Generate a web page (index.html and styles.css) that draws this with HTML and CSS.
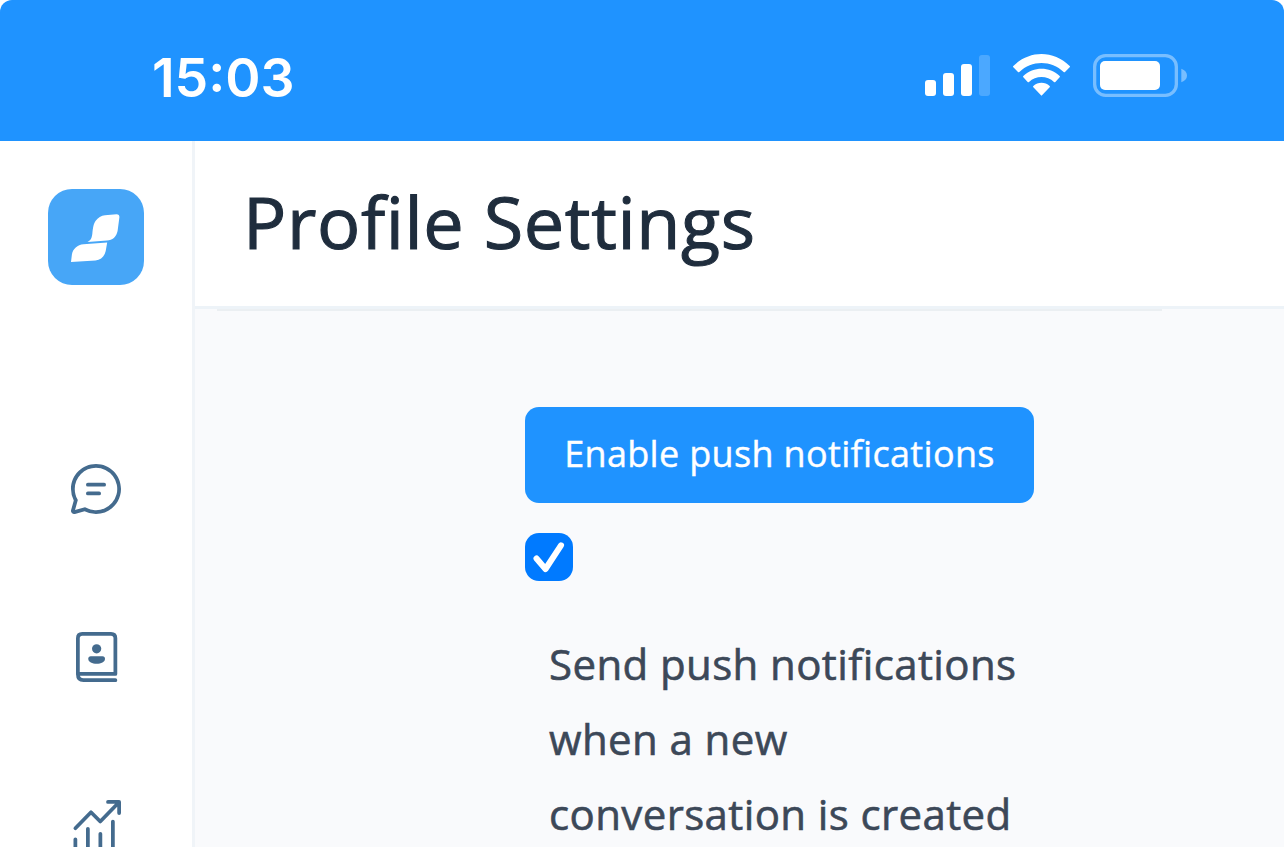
FILE: index.html
```
<!DOCTYPE html>
<html lang="en">
<head>
  <meta charset="utf-8">
  <title>Profile Settings</title>
  <link rel="stylesheet" href="styles.css">
</head>
<body>
  <div class="status-bar">
    <span class="time">15:03</span>
    <div class="status-icons">
      <svg class="signal" viewBox="0 0 65 41">
        <rect x="0" y="25" width="11" height="16" rx="3" />
        <rect x="18" y="18" width="11" height="23" rx="3" />
        <rect x="36" y="9" width="11" height="32" rx="3" />
        <rect x="54" y="0" width="11" height="41" rx="3" opacity="0.2" />
      </svg>
      <svg class="wifi" viewBox="0 0 171 126">
        <path d="M1 36C49-12 122-12 170 36Q172 38 170 40L156 54Q154 56 152 54C115 18 56 18 19 54Q17 56 15 54L1 40Q-1 38 1 36Z" />
        <path d="M31 66C62 37 109 37 140 66Q142 68 140 70L127 84Q125 86 123 84C103 64 68 64 48 84Q46 86 44 84L31 70Q29 68 31 66Z" />
        <path d="M61 96C75 83 96 83 110 96Q112 98 110 100L87 124Q85.500 126 84 124L61 100Q59 98 61 96Z" />
      </svg>
      <svg class="battery" viewBox="0 0 94 43">
        <rect class="battery-case" x="1.650" y="1.650" width="81.700" height="39.700" rx="11" />
        <rect x="7" y="7" width="60" height="29" rx="5" />
        <path d="M88.300 14.700Q94 17 94 21.500T88.300 28.300Z" opacity="0.4" />
      </svg>
    </div>
  </div>

  <div class="app">
    <nav class="sidebar">
      <a class="logo">
        <svg viewBox="0 0 96 96">
          <path d="M57 26.300L68.500 25.200Q71.600 25.200 71.400 28.300L69.600 42C68.300 48 64.500 51.200 59 51.600L39.500 53C43 51.500 43.800 48.500 44.300 45C45 38 45.400 35.500 47.500 32Q51.300 26.900 57 26.300Z" />
          <path d="M59.200 53.600L57.700 62C56.400 67.500 53 70.900 47.500 71.400L23 73L23.900 65.500C24.800 60 29.500 55.700 35.500 55.300Z" />
        </svg>
      </a>
      <a class="nav-item">
        <svg viewBox="0 0 24 24">
          <path class="solid" d="M12 2c5.523 0 10 4.477 10 10s-4.477 10-10 10a9.960 9.960 0 0 1-4.587-1.112l-3.826 1.067a1.250 1.250 0 0 1-1.540-1.540l1.068-3.823A9.960 9.960 0 0 1 2 12C2 6.477 6.477 2 12 2Zm0 1.500A8.500 8.500 0 0 0 3.500 12c0 1.470.373 2.883 1.073 4.137l.150.270-1.112 3.984 3.987-1.112.270.150A8.500 8.500 0 1 0 12 3.500Z" />
          <path d="M8.750 10.250h6.500M8.750 13.750h4.500" />
        </svg>
      </a>
      <a class="nav-item">
        <svg viewBox="0 0 24 24">
          <path d="M4.750 19V4.500Q4.750 2.750 6.500 2.750H18Q19.750 2.750 19.750 4.500V18.750H4.750Q4.750 21.250 7 21.250H19.750" />
          <circle class="solid" cx="12.250" cy="8.700" r="1.850" />
          <path class="solid" d="M9.900 11.700H14.600Q15.600 11.700 15.600 12.700C15.600 14 14 14.700 12.250 14.700S8.900 14 8.900 12.700Q8.900 11.700 9.900 11.700Z" />
        </svg>
      </a>
      <a class="nav-item">
        <svg viewBox="0 0 24 24">
          <path d="M3.750 13.300L10 6.900L13.700 10.600L21.200 2.900M16.800 2.750H21.250V7.200" />
          <path d="M3.750 17.700V21.250M8.750 13.500V21.250M13.750 15.500V21.250M18.750 10.600V21.250" />
        </svg>
      </a>
    </nav>

    <div class="main">
      <header class="page-header">
        <h1>Profile Settings</h1>
      </header>
      <section class="notifications">
        <button type="button">Enable push notifications</button>
        <div class="option">
          <span class="checkbox">
            <svg viewBox="0 0 48 48">
              <path d="M11.500 25.500L20.500 36L36 12.300" />
            </svg>
          </span>
          <label>Send push notifications when a new conversation is created</label>
        </div>
      </section>
    </div>
  </div>
</body>
</html>
```
FILE: styles.css
```
* {
  box-sizing: border-box;
}

body {
  margin: 0;
  height: 847px;
  overflow: hidden;
  background-color: white;
  font-family: "Open Sans", sans-serif;
}

.status-bar {
  display: flex;
  justify-content: space-between;
  height: 141px;
  padding: 54px 97px 0 152px;
  background-color: #1f93ff;
  border-radius: 12px 12px 0 0;
  color: white;
}

.time {
  font-family: Inter, sans-serif;
  font-size: 53.5px;
  font-weight: 600;
  line-height: 47px;
}

.status-icons {
  display: flex;
  align-items: flex-start;
  fill: white;
}

.signal {
  width: 65px;
  height: 41px;
  margin-top: 1px;
}

.wifi {
  width: 57px;
  height: 42px;
  margin: 0 23px;
}

.battery {
  width: 94px;
  height: 43px;
}

.battery-case {
  fill: none;
  stroke: white;
  stroke-width: 3.3px;
  opacity: 0.4;
}

.app {
  display: flex;
  height: 706px;
}

.sidebar {
  display: flex;
  flex-direction: column;
  align-items: center;
  flex-shrink: 0;
  width: 195px;
  padding-top: 48px;
  border-right: 3px solid #f0f4f8;
}

.logo {
  width: 96px;
  height: 96px;
  margin-bottom: 120px;
  background-color: #47a6f7;
  border-radius: 24px;
  fill: white;
}

.nav-item {
  flex-shrink: 0;
  width: 60px;
  height: 60px;
  margin: 54px 0;
}

.nav-item svg {
  display: block;
  fill: none;
  stroke: #446b8e;
  stroke-width: 1.5;
  stroke-linecap: round;
  stroke-linejoin: round;
}

.nav-item .solid {
  fill: #446b8e;
  stroke: none;
}

.main {
  flex: 1;
  background-color: #f9fafc;
}

.page-header {
  height: 168px;
  padding: 31px 48px;
  background-color: white;
  border-bottom: 3px solid #edf3f8;
}

h1 {
  margin: 0;
  color: #1f2d3d;
  font-size: 72px;
  font-weight: 400;
  letter-spacing: 0.62px;
  line-height: 98px;
  -webkit-text-stroke: 1.1px #1f2d3d;
}

.notifications {
  width: 945px;
  margin-left: 22px;
  padding: 96px 0 0 308px;
  border-top: 2px solid #ebeff2;
}

button {
  display: block;
  width: 509px;
  height: 96px;
  padding: 0 0 3px;
  background-color: #1f93ff;
  border: none;
  border-radius: 14px;
  color: white;
  font-family: inherit;
  font-size: 36px;
  font-weight: 400;
  letter-spacing: 0.33px;
  -webkit-text-stroke: 0.4px white;
}

.option {
  margin-top: 30px;
}

.checkbox {
  display: block;
  width: 48px;
  height: 48px;
  background-color: #007aff;
  border-radius: 14px;
}

.checkbox path {
  fill: none;
  stroke: white;
  stroke-width: 6;
  stroke-linecap: round;
  stroke-linejoin: round;
}

label {
  display: block;
  width: 490px;
  margin: 45px 0 0 24px;
  color: #3c4858;
  font-size: 42px;
  letter-spacing: 0.39px;
  line-height: 75px;
  -webkit-text-stroke: 0.6px #3c4858;
}
```
